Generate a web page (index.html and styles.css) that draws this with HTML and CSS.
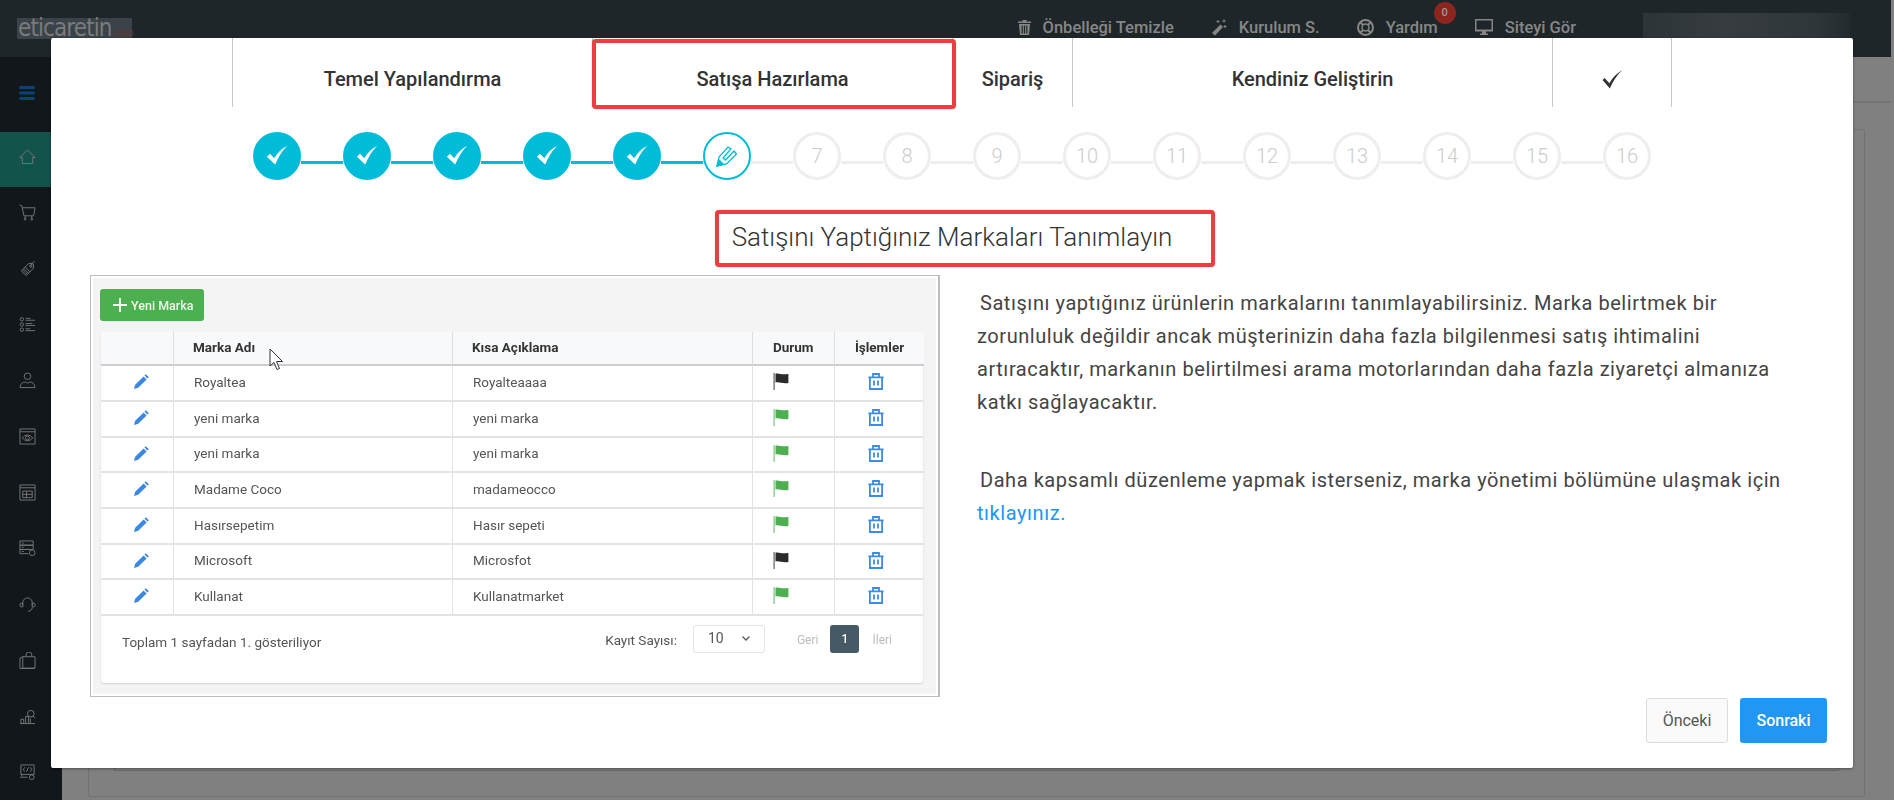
FILE: index.html
```html
<!DOCTYPE html>
<html lang="tr">
<head>
<meta charset="utf-8">
<title>Kurulum</title>
<link rel="stylesheet" href="styles.css">
</head>
<body>
<svg class="defs" width="0" height="0" aria-hidden="true">
  <symbol id="i-check" viewBox="0 0 20 20"><path d="M2.2 10.6 4.6 8.3 7.9 11.7C10.2 8 13.4 4.7 17.8 2.2 13.9 6.2 11 10.9 8.6 16.6Z" fill="currentColor"/></symbol>
  <symbol id="i-pencil" viewBox="0 0 18 18"><path d="M13.6 1.2 16.8 4.4 15.3 5.9 12.1 2.7ZM11.2 3.6 14.4 6.8 5.5 15.7 1 17 2.3 12.5Z" fill="currentColor"/></symbol>
  <symbol id="i-flag" viewBox="0 0 16 17"><path d="M0.5 0H1.7V17H0.5Z" fill="currentColor" opacity=".75"/><path d="M2.5 0.8C6 -0.3 8 2.2 15.4 1V10C9 11 6 8.4 2.5 9.6Z" fill="currentColor"/></symbol>
  <symbol id="i-trash" viewBox="0 0 16 17" fill="none" stroke="currentColor" stroke-width="1.8"><path d="M0.4 4.4H15.6M5 4.4V1H11V4.4M1.9 4.4V16H14.1V4.4"/><path d="M6 7.5V12.6M10 7.5V12.6"/></symbol>
</svg>

<div class="app">
  <header class="topbar">
    <div class="logo"><span class="logo-name">eticaretin</span><span class="logo-tld">.com</span></div>
    <nav class="actions">
      <a class="action">
        <svg class="action-icon" width="13" height="15" viewBox="0 0 13 15"><path d="M4.5 0H8.5V1.5H13V3H0V1.5H4.5ZM1 4H12L11 15H2ZM3.6 5.5V13.5H4.8V5.5ZM5.9 5.5V13.5H7.1V5.5ZM8.2 5.5V13.5H9.4V5.5Z" fill="currentColor" fill-rule="evenodd"/></svg>
        Önbelleği Temizle
      </a>
      <a class="action">
        <svg class="action-icon" width="16" height="17" viewBox="0 0 16 17"><path d="M9.5 5.5 12 8 4 16.5 1 14Z" fill="currentColor"/><path d="M7 1V4M5.500 2.500H8.500M13 0.500V3.500M11.500 2H14.500M14 6V9M12.500 7.500H15.500" stroke="currentColor" fill="none"/></svg>
        Kurulum S.
      </a>
      <a class="action">
        <svg class="action-icon" width="17" height="17" viewBox="0 0 17 17" fill="none" stroke="currentColor"><circle cx="8.500" cy="8.500" r="7.500" stroke-width="2"/><circle cx="8.500" cy="8.500" r="3.500" stroke-width="1.500"/><path d="M3 3 6 6M14 3 11 6M3 14 6 11M14 14 11 11" stroke-width="2"/></svg>
        Yardım
        <span class="badge">0</span>
      </a>
      <a class="action">
        <svg class="action-icon" width="18" height="16" viewBox="0 0 18 16"><path d="M0 0H18V12.500H11V14.500H13V16H5V14.500H7V12.500H0ZM1.500 1.500V10.500H16.500V1.500Z" fill="currentColor" fill-rule="evenodd"/></svg>
        Siteyi Gör
      </a>
    </nav>
    <div class="account"></div>
  </header>

  <div class="below">
    <aside class="sidebar">
      <div class="side-toggle">
        <svg width="16" height="14" viewBox="0 0 16 14"><path d="M1.500 0H14.500A1.500 1.500 0 0 1 14.500 3H1.500A1.500 1.500 0 0 1 1.500 0ZM1.500 5.500H14.500A1.500 1.500 0 0 1 14.500 8.500H1.500A1.500 1.500 0 0 1 1.500 5.500ZM1.500 11H14.500A1.500 1.500 0 0 1 14.500 14H1.500A1.500 1.500 0 0 1 1.500 11Z" fill="currentColor"/></svg>
      </div>
      <a class="side-item is-active"><svg viewBox="0 0 18 18" class="side-icon"><path d="M1 10 9 2 17 10H14.500V16.500H3.500V10Z"/></svg></a>
      <a class="side-item"><svg viewBox="0 0 18 18" class="side-icon"><path d="M0.500 1 3 1.800 5.200 12.500H15.500L17 4H3.600M6.500 12.500V15M13.500 12.500V15"/><circle cx="6.500" cy="16" r="1"/><circle cx="13.500" cy="16" r="1"/></svg></a>
      <a class="side-item"><svg viewBox="0 0 18 18" class="side-icon"><path d="M10.500 3.500 15 4 15.500 8.500 7.500 16.500 2.500 11.500ZM5 9 10 14M6.500 7.500 11.500 12.500M4 10.500 8.500 15"/><circle cx="12.500" cy="6.500" r="1.200"/><path d="M13 5.500C14 3.500 15 1.500 16.500 2"/></svg></a>
      <a class="side-item"><svg viewBox="0 0 18 18" class="side-icon"><circle cx="3" cy="3.500" r="1.800"/><circle cx="3" cy="9" r="1.800"/><circle cx="3" cy="14.500" r="1.800"/><path d="M7 2.500H12M7 4.500H17M7 8H14M7 10H17M7 13.500H12M7 15.500H17"/></svg></a>
      <a class="side-item"><svg viewBox="0 0 18 18" class="side-icon"><circle cx="9" cy="4.500" r="3.500"/><path d="M1 16.500C1 12.500 4.500 10.500 6.500 10.500 8 12 10 12 11.500 10.500 13.500 10.500 17 12.500 17 16.500Z"/></svg></a>
      <a class="side-item"><svg viewBox="0 0 18 18" class="side-icon"><path d="M1 1H17V17H1ZM1 4H17"/><path d="M3.500 10.500C6.500 6.500 11.500 6.500 14.500 10.500 11.500 14.500 6.500 14.500 3.500 10.500Z"/><circle cx="9" cy="10.500" r="2"/></svg></a>
      <a class="side-item"><svg viewBox="0 0 18 18" class="side-icon"><path d="M1 1H17V17H1ZM1 4H17M4 7.500H14V14.500H4ZM4 11H14M8 7.500V14.500"/></svg></a>
      <a class="side-item"><svg viewBox="0 0 18 18" class="side-icon"><path d="M1 1H15V5.500H1ZM1 5.500H15V10H1ZM1 10H11M1 10V14.500H10M3 3.200H5M3 7.700H5M3 12.200H5"/><circle cx="14" cy="13.500" r="3"/></svg></a>
      <a class="side-item"><svg viewBox="0 0 18 18" class="side-icon"><path d="M4 10V7A5 5 0 0 1 14 7V10M14 12C14 15 12 16 9.500 16"/><path d="M2 7.500H4V11.500H2C0.500 10.500 0.500 8.500 2 7.500ZM14 7.500H16C17.500 8.500 17.500 10.500 16 11.500H14Z"/></svg></a>
      <a class="side-item"><svg viewBox="0 0 18 18" class="side-icon"><path d="M4 5H17V17H4ZM1 6.500 4 5M1 6.500V17.500H15L17 17M7.500 5V3A3 3 0 0 1 13.500 3V5"/></svg></a>
      <a class="side-item"><svg viewBox="0 0 18 18" class="side-icon"><path d="M1 16.500H17M2 16.500V12H5V16.500M7 16.500V9H10V16.500"/><circle cx="12.500" cy="6" r="3.500"/><path d="M15 8.500 17 11M12 16.500V11"/></svg></a>
      <a class="side-item"><svg viewBox="0 0 18 18" class="side-icon"><path d="M2 1H16V11H2ZM1 14H9M6 3.500 4.500 6 6 8M12 3.500 13.500 6 12 8M10 3.500 8 8M3 11V13"/><circle cx="13.500" cy="14" r="2.500"/></svg></a>
    </aside>
    <main class="content">
      <div class="subhead"></div>
      <div class="outer"><div class="inner"></div></div>
    </main>
  </div>
</div>

<section class="modal">
  <span class="mark mark-tab"></span>
  <span class="mark mark-title"></span>

  <div class="tabs">
    <div class="tab tab-m">Temel Yapılandırma</div>
    <div class="tab tab-m">Satışa Hazırlama</div>
    <div class="tab tab-s">Sipariş</div>
    <div class="tab tab-l">Kendiniz Geliştirin</div>
    <div class="tab tab-s">
      <svg width="21" height="19" viewBox="0 0 20 18"><path d="M0.500 9.500 2.500 7.500 7 12.500C10 7.500 14 3 19.500 0 14.500 4.500 10.500 10.500 7.500 17.500Z" fill="currentColor"/></svg>
    </div>
  </div>

  <div class="stepper">
    <span class="step is-done"><svg width="26" height="26"><use href="#i-check"/></svg></span><i class="conn is-done"></i>
    <span class="step is-done"><svg width="26" height="26"><use href="#i-check"/></svg></span><i class="conn is-done"></i>
    <span class="step is-done"><svg width="26" height="26"><use href="#i-check"/></svg></span><i class="conn is-done"></i>
    <span class="step is-done"><svg width="26" height="26"><use href="#i-check"/></svg></span><i class="conn is-done"></i>
    <span class="step is-done"><svg width="26" height="26"><use href="#i-check"/></svg></span><i class="conn is-done"></i>
    <span class="step is-current">
      <svg width="22" height="22" viewBox="0 0 22 22" fill="none" stroke="currentColor" stroke-width="1.300"><path d="M1 21 3 12 12 2 15 4 7 13 9.500 15 18 6 20.500 9 10.500 19Z"/><path d="M1 21 3 15 7.500 19.500Z" fill="currentColor"/></svg>
    </span><i class="conn"></i>
    <span class="step">7</span><i class="conn"></i>
    <span class="step">8</span><i class="conn"></i>
    <span class="step">9</span><i class="conn"></i>
    <span class="step">10</span><i class="conn"></i>
    <span class="step">11</span><i class="conn"></i>
    <span class="step">12</span><i class="conn"></i>
    <span class="step">13</span><i class="conn"></i>
    <span class="step">14</span><i class="conn"></i>
    <span class="step">15</span><i class="conn"></i>
    <span class="step">16</span>
  </div>

  <h2 class="title">Satışını Yaptığınız Markaları Tanımlayın</h2>

  <div class="body">
    <figure class="shot">
      <div class="shot-inner">
        <button class="btn-new">
          <svg width="14" height="14" viewBox="0 0 14 14"><path d="M6 0H8V6H14V8H8V14H6V8H0V6H6Z" fill="currentColor"/></svg>
          Yeni Marka
        </button>
        <div class="panel">
          <table class="grid">
            <thead>
              <tr><th class="c-edit"></th><th class="c-name">Marka Adı</th><th class="c-desc">Kısa Açıklama</th><th class="c-state">Durum</th><th class="c-ops">İşlemler</th></tr>
            </thead>
            <tbody>
              <tr><td class="c-edit"><svg class="ic-edit" width="17" height="17"><use href="#i-pencil"/></svg></td><td class="c-name">Royaltea</td><td class="c-desc">Royalteaaaa</td><td class="c-state"><svg class="ic-off" width="16" height="17"><use href="#i-flag"/></svg></td><td class="c-ops"><svg class="ic-del" width="16" height="17"><use href="#i-trash"/></svg></td></tr>
              <tr><td class="c-edit"><svg class="ic-edit" width="17" height="17"><use href="#i-pencil"/></svg></td><td class="c-name">yeni marka</td><td class="c-desc">yeni marka</td><td class="c-state"><svg class="ic-on" width="16" height="17"><use href="#i-flag"/></svg></td><td class="c-ops"><svg class="ic-del" width="16" height="17"><use href="#i-trash"/></svg></td></tr>
              <tr><td class="c-edit"><svg class="ic-edit" width="17" height="17"><use href="#i-pencil"/></svg></td><td class="c-name">yeni marka</td><td class="c-desc">yeni marka</td><td class="c-state"><svg class="ic-on" width="16" height="17"><use href="#i-flag"/></svg></td><td class="c-ops"><svg class="ic-del" width="16" height="17"><use href="#i-trash"/></svg></td></tr>
              <tr><td class="c-edit"><svg class="ic-edit" width="17" height="17"><use href="#i-pencil"/></svg></td><td class="c-name">Madame Coco</td><td class="c-desc">madameocco</td><td class="c-state"><svg class="ic-on" width="16" height="17"><use href="#i-flag"/></svg></td><td class="c-ops"><svg class="ic-del" width="16" height="17"><use href="#i-trash"/></svg></td></tr>
              <tr><td class="c-edit"><svg class="ic-edit" width="17" height="17"><use href="#i-pencil"/></svg></td><td class="c-name">Hasırsepetim</td><td class="c-desc">Hasır sepeti</td><td class="c-state"><svg class="ic-on" width="16" height="17"><use href="#i-flag"/></svg></td><td class="c-ops"><svg class="ic-del" width="16" height="17"><use href="#i-trash"/></svg></td></tr>
              <tr><td class="c-edit"><svg class="ic-edit" width="17" height="17"><use href="#i-pencil"/></svg></td><td class="c-name">Microsoft</td><td class="c-desc">Microsfot</td><td class="c-state"><svg class="ic-off" width="16" height="17"><use href="#i-flag"/></svg></td><td class="c-ops"><svg class="ic-del" width="16" height="17"><use href="#i-trash"/></svg></td></tr>
              <tr><td class="c-edit"><svg class="ic-edit" width="17" height="17"><use href="#i-pencil"/></svg></td><td class="c-name">Kullanat</td><td class="c-desc">Kullanatmarket</td><td class="c-state"><svg class="ic-on" width="16" height="17"><use href="#i-flag"/></svg></td><td class="c-ops"><svg class="ic-del" width="16" height="17"><use href="#i-trash"/></svg></td></tr>
            </tbody>
          </table>
          <div class="grid-foot">
            <span class="total">Toplam 1 sayfadan 1. gösteriliyor</span>
            <span class="per-label">Kayıt Sayısı:</span>
            <span class="per-select">10
              <svg width="8" height="5" viewBox="0 0 8 5" fill="none" stroke="currentColor" stroke-width="1.300"><path d="M0.500 0.500 4 4 7.500 0.500"/></svg>
            </span>
            <span class="page-link">Geri</span>
            <span class="page-now">1</span>
            <span class="page-link">İleri</span>
          </div>
        </div>
      </div>
      <svg class="cursor" width="15" height="23" viewBox="0 0 15 23"><path d="M1 1V18L5 14.500 8 21.500 10.500 20.500 7.500 13.500H13.500Z" fill="#fff" stroke="#333" stroke-width="1"/></svg>
    </figure>
    <div class="copy">
      <p class="para">Satışını yaptığınız ürünlerin markalarını tanımlayabilirsiniz. Marka belirtmek bir zorunluluk değildir ancak müşterinizin daha fazla bilgilenmesi satış ihtimalini artıracaktır, markanın belirtilmesi arama motorlarından daha fazla ziyaretçi almanıza katkı sağlayacaktır.</p>
      <p class="para">Daha kapsamlı düzenleme yapmak isterseniz, marka yönetimi bölümüne ulaşmak için <a class="link">tıklayınız.</a></p>
    </div>
  </div>

  <div class="foot">
    <button class="btn btn-prev">Önceki</button>
    <button class="btn btn-next">Sonraki</button>
  </div>
</section>
</body>
</html>
```
FILE: styles.css
```css
* { box-sizing: border-box; }
html, body { margin: 0; height: 100%; }
body {
  position: relative;
  width: 1894px;
  height: 800px;
  overflow: hidden;
  background: #808080;
  font-family: Roboto, "Liberation Sans", sans-serif;
  color: #333;
}
.defs { position: absolute; }

/* dimmed page behind the dialog */
.app { display: flex; flex-direction: column; height: 800px; }
.topbar {
  display: flex;
  align-items: flex-start;
  flex: none;
  height: 57px;
  margin-right: 3px;
  padding: 13px 41px 0 17px;
  background: #1f262a;
}
.logo {
  display: flex;
  align-items: baseline;
  width: 115px;
  height: 21px;
  margin-top: 5px;
  padding-left: 1px;
  background: #3a424a;
  color: #7b7b7b;
  font-family: "DejaVu Sans Condensed", "DejaVu Sans", sans-serif;
  line-height: 21px;
}
.logo-name { font-size: 24px; letter-spacing: -.9px; }
.logo-tld { font-size: 10px; color: #6d3328; }
.actions { display: flex; gap: 37px; margin-left: auto; padding-top: 4px; }
.action {
  position: relative;
  display: flex;
  align-items: center;
  gap: 12px;
  height: 20px;
  color: #868686;
  font-size: 16.5px;
  font-weight: 500;
}
.action-icon { flex: none; }
.badge {
  position: absolute;
  top: -15px;
  right: -18px;
  width: 22px;
  height: 22px;
  border-radius: 50%;
  background: #8b251d;
  color: #a09a98;
  font-size: 11px;
  line-height: 22px;
  text-align: center;
}
.account {
  width: 207px;
  height: 37px;
  margin-left: 67px;
  background: linear-gradient(90deg, #2d3438, #363c40 40%, #2f363a 85%, #222a2e);
}
.below { display: flex; flex: 1; min-height: 0; }
.sidebar { flex: none; width: 62px; background: #12171b; color: #777; }
.side-toggle {
  display: flex;
  align-items: center;
  justify-content: center;
  width: 54px;
  height: 75px;
  padding-bottom: 3px;
  color: #0b4378;
}
.side-item {
  display: flex;
  align-items: center;
  justify-content: center;
  width: 54px;
  height: 56px;
  padding-bottom: 6px;
}
.side-item.is-active { width: 62px; height: 55px; padding-right: 8px; background: #14534c; }
.side-icon { width: 17px; height: 17px; fill: none; stroke: currentColor; stroke-width: 1; }
.content { flex: 1; display: flex; flex-direction: column; min-width: 0; margin-right: 3px; }
.subhead { flex: none; height: 46px; border-bottom: 2px solid #757575; }
.outer {
  display: flex;
  flex-direction: column;
  height: 668px;
  margin: 26px 26px 0;
  padding: 25px 25px 25px;
  border: 1px solid #727272;
  border-radius: 3px;
}
.inner { flex: 1; border: 1px solid #6e6e6e; }

/* dialog */
.modal {
  position: absolute;
  top: 38px;
  left: 51px;
  width: 1802px;
  height: 730px;
  background: #fff;
  border-radius: 2px;
  box-shadow: 0 1px 3px rgba(0, 0, 0, .4);
}
.mark {
  position: absolute;
  z-index: 2;
  border: 4px solid #ee3d40;
  border-radius: 4px;
  box-shadow: 0 0 1px rgba(0, 0, 0, .5);
}
.mark-tab { top: 1px; left: 541px; width: 364px; height: 70px; }
.mark-title { top: 172px; left: 664px; width: 500px; height: 57px; }

.tabs { display: flex; height: 69px; margin-left: 181px; }
.tab {
  display: flex;
  align-items: center;
  justify-content: center;
  padding-top: 13px;
  border-left: 1px solid #c6c6c6;
  font-size: 20px;
  font-weight: 500;
  color: #333;
}
.tab:last-child { border-right: 1px solid #c6c6c6; width: 120px; }
.tab-m { width: 360px; }
.tab-s { width: 120px; }
.tab-l { width: 480px; }

.stepper { display: flex; margin: 25px 0 0 202px; }
.step {
  display: flex;
  align-items: center;
  justify-content: center;
  flex: none;
  width: 48px;
  height: 48px;
  border: 3px solid #eee;
  border-radius: 50%;
  color: #ccc;
  font-size: 20px;
  font-weight: 300;
}
.step.is-done { border-color: #00bcd9; background: #00bcd9; color: #fff; }
.step.is-current { border: 2px solid #00bcd9; color: #00bcd9; }
.conn { flex: none; width: 42px; height: 3px; margin-top: 29px; background: #eee; }
.conn.is-done { background: #00bcd9; }

.title {
  margin: 30px 0 0;
  font-size: 26px;
  font-weight: 300;
  line-height: 54px;
  text-align: center;
  color: #333;
}

.body { display: flex; gap: 37px; margin: 11px 0 0 39px; }
.shot {
  position: relative;
  flex: none;
  width: 850px;
  height: 422px;
  margin: 0;
  padding: 2px;
  background: #fff;
  border: 1px solid #bdbdbd;
  border-right-width: 2px;
  filter: blur(.25px);
}
.shot-inner { height: 100%; padding: 11px 13px 11px 7px; background: #f4f4f4; }
.btn-new {
  display: flex;
  align-items: center;
  gap: 4px;
  width: 104px;
  height: 32px;
  margin: 0;
  padding: 0 0 0 13px;
  border: 0;
  border-radius: 3px;
  background: #4caf50;
  color: #eef7ee;
  font: 500 12.5px Roboto, sans-serif;
}
.panel {
  height: 351px;
  margin: 11px 0 0 1px;
  background: #fff;
  border-radius: 3px;
  box-shadow: 0 1px 2px rgba(0, 0, 0, .15);
}
.grid { width: 823px; border-collapse: separate; border-spacing: 0; table-layout: fixed; font-size: 13.5px; color: #555; }
.grid th {
  height: 34px;
  padding-bottom: 3px;
  background: #f8f9fb;
  border-right: 1px solid #dedede;
  border-bottom: 2px solid #cdcdcd;
  color: #333;
  font-weight: 700;
  text-align: left;
}
.grid td {
  height: 36px;
  padding-bottom: 4px;
  border-right: 1px solid #e2e2e2;
  border-bottom: 2px solid #e4e4e4;
}
.grid tbody tr:nth-child(3) td,
.grid tbody tr:nth-child(6) td { height: 35px; }
.grid th:last-child, .grid td:last-child { border-right: 0; }
.grid svg { display: block; }
.c-edit { width: 73px; }
.c-name { width: 279px; padding-left: 20px; }
.c-desc { width: 300px; padding-left: 20px; }
.c-state { width: 82px; }
.c-ops { width: 89px; }
.grid th.c-name, .grid th.c-desc { padding-left: 19px; }
.grid .c-state { padding-left: 20px; }
.grid th.c-state { text-align: left; }
.grid th.c-ops { text-align: center; }
.ic-edit { margin-left: 31px; color: #3b87e6; }
.ic-on { color: #4caf50; }
.ic-off { color: #2b2b2b; }
.ic-del { margin-left: 32px; color: #3f8ae8; }

.grid-foot { display: flex; align-items: flex-start; padding: 9px 31px 0 21px; font-size: 13.5px; color: #555; }
.total { margin: 9px auto 0 0; line-height: 16px; }
.per-label { margin-top: 7px; line-height: 16px; }
.per-select {
  display: flex;
  align-items: center;
  justify-content: space-between;
  width: 72px;
  height: 28px;
  margin-left: 16px;
  padding: 0 14px 2px 14px;
  border: 1px solid #e3e3e3;
  border-radius: 3px;
  font-size: 14px;
}
.page-link { margin: 7px 0 0 13px; color: #bdbdbd; font-size: 12px; line-height: 16px; }
.page-link:nth-last-child(3) { margin: 7px 0 0 32px; }
.page-now {
  width: 29px;
  height: 28px;
  margin-left: 12px;
  border-radius: 3px;
  background: #455a64;
  color: #fff;
  font-size: 12px;
  font-weight: 500;
  line-height: 28px;
  text-align: center;
}
.cursor { position: absolute; top: 72px; left: 178px; }

.copy { flex: none; width: 808px; padding-top: 12px; }
.para {
  margin: 0 0 45px;
  font-size: 20px;
  line-height: 33px;
  letter-spacing: .56px;
  text-indent: 3px;
  color: #444;
}
.link { color: #2196f3; }

.foot { display: flex; justify-content: flex-end; gap: 12px; margin-top: 1px; padding-right: 26px; }
.btn {
  height: 45px;
  margin: 0;
  border-radius: 3px;
  font: 400 16px Roboto, sans-serif;
}
.btn-prev { width: 82px; border: 1px solid #dcdcdc; background: #fafafa; color: #555; }
.btn-next { width: 87px; border: 0; background: #2196f3; color: #fff; font-weight: 500; }
```
